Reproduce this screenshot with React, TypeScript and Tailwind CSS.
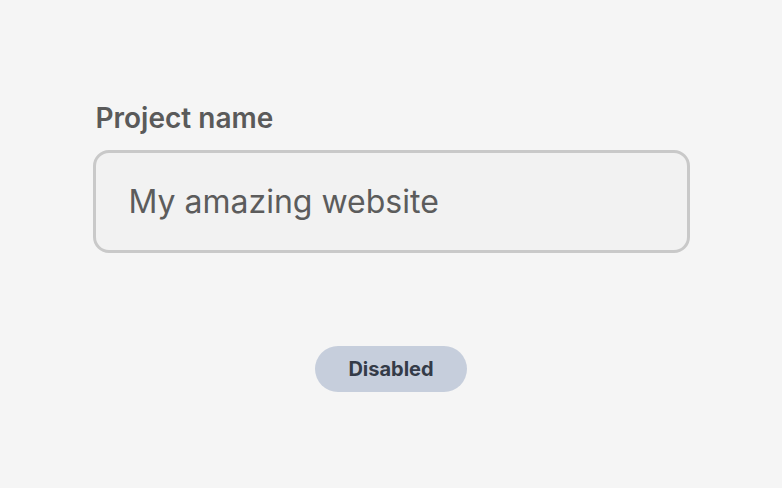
export default function App() {
  return (
    <div className="min-h-[488px] w-full bg-[#f5f5f5] flex flex-col items-center pt-[98px] font-['Inter',sans-serif]">
      <div className="w-[597px] flex flex-col">
        <label className="ml-[3px] text-[28px] leading-[40px] font-semibold text-[#5a5a5a]">Project name</label>
        <div className="mt-[12px] h-[103px] rounded-[16px] border-[3px] border-[#c9c9c9] bg-[#f2f2f2] flex items-center px-[33px]">
          <span className="text-[32px] text-[#5c5c5c]">My amazing website</span>
        </div>
      </div>
      <button
        disabled
        className="mt-[93px] w-[152px] h-[46px] rounded-full bg-[#c6cedc] text-[20px] font-bold text-[#343b48]"
      >
        Disabled
      </button>
    </div>
  )
}
